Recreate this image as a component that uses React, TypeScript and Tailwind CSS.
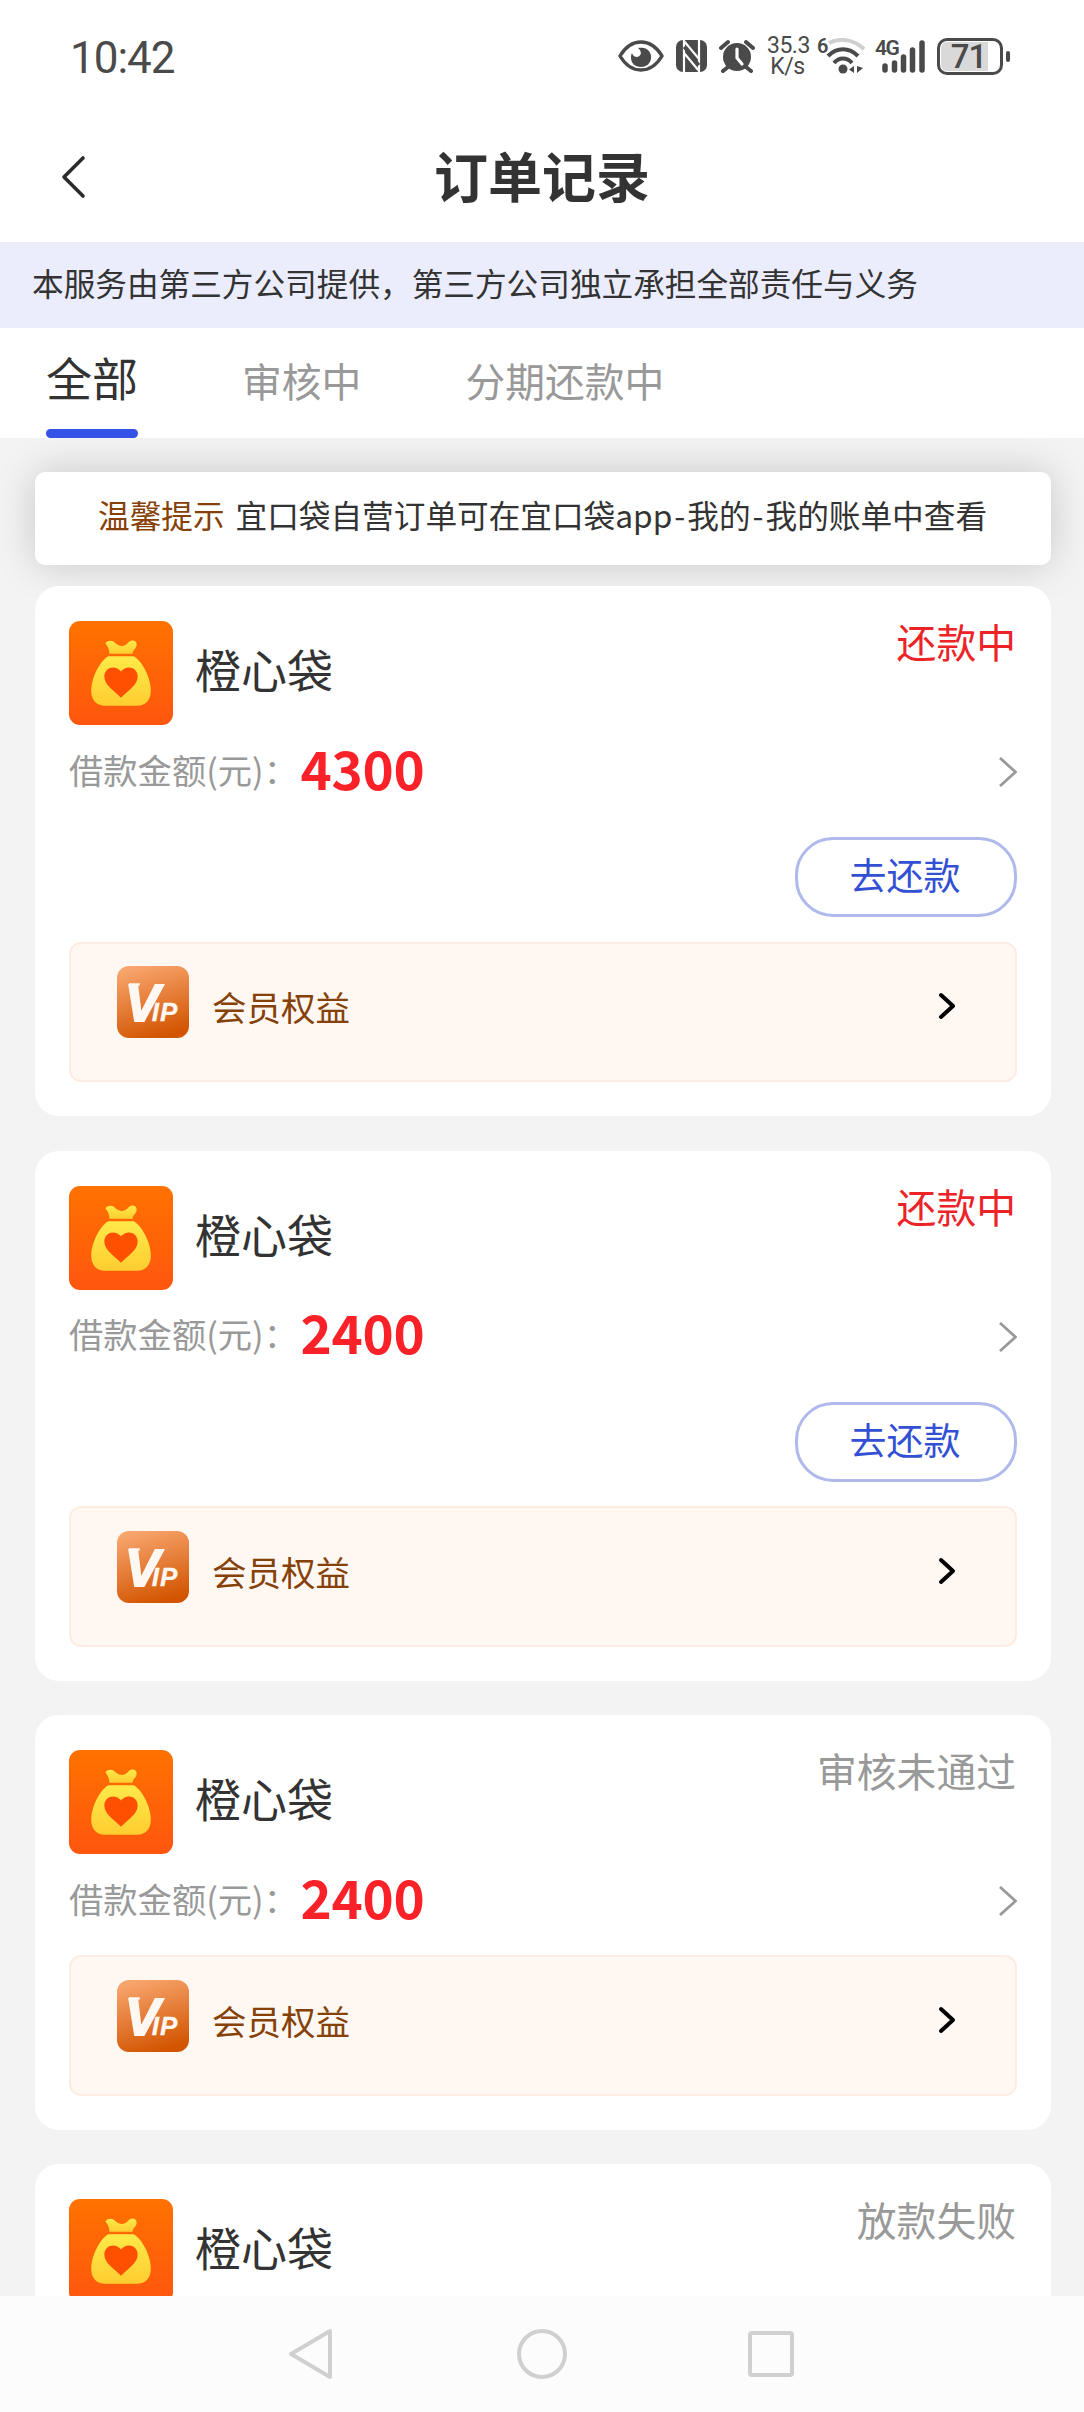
import clsx from 'clsx';

type Order = {
  id: number;
  name: string;
  amount?: number;
  status: string;
  repayable: boolean;
};

const orders: Order[] = [
  { id: 1, name: '橙心袋', amount: 4300, status: '还款中', repayable: true },
  { id: 2, name: '橙心袋', amount: 2400, status: '还款中', repayable: true },
  { id: 3, name: '橙心袋', amount: 2400, status: '审核未通过', repayable: false },
  { id: 4, name: '橙心袋', status: '放款失败', repayable: false },
];

const tabs = ['全部', '审核中', '分期还款中'];

const StatusBar = () => (
  <div className="flex h-[112px] shrink-0 items-start justify-between pl-[70px] pr-[74px] pt-[36px] font-['Roboto'] text-[#4a4a4a]">
    <span className="text-[44px] leading-[44px] tracking-[-1px]">10:42</span>
    <div className="flex h-[40px] items-center">
      <svg className="mr-3 h-[32px] w-[46px]" viewBox="0 0 46 32">
        <path
          d="M2 16C8 6 15 2 23 2s15 4 21 14c-6 10-13 14-21 14S8 26 2 16Z"
          fill="none"
          stroke="currentColor"
          strokeWidth="3.4"
        />
        <path d="M20 8c10-2 14 5 13 11-1 5-5 8-10 8-6 0-10-4-10-9 0-2 0-3 1-5 1 3 3 4 5 4 5-1 5-6 1-9Z" fill="currentColor" />
      </svg>
      <svg className="mr-3 h-[32px] w-[31px]" viewBox="0 0 31 32">
        <rect width="31" height="32" rx="7" fill="currentColor" />
        <path d="M8 32V1l15 18V0M8 13l15 18V1" fill="none" stroke="white" strokeWidth="2.2" />
        <path d="M8 7l15 18" stroke="currentColor" strokeWidth="3" />
      </svg>
      <svg className="mr-3 h-[34px] w-[36px]" viewBox="0 0 36 34">
        <circle cx="18" cy="18" r="14" fill="currentColor" />
        <path d="M2 9l7-6M34 9l-7-6M9 28l-5 4M27 28l5 4" stroke="currentColor" strokeWidth="4" strokeLinecap="round" />
        <path d="M18 10v9l5 6" fill="none" stroke="white" strokeWidth="3.2" strokeLinecap="round" />
      </svg>
      <div className="mr-[9px] w-[41px] text-center text-[23px] leading-[21px] tracking-[-0.5px]">
        <div>35.3</div>
        <div>K/s</div>
      </div>
      <div className="relative mr-[10px] h-[37px] w-[48px]">
        <span className="absolute left-0 top-0 text-[20px] font-semibold leading-[16px]">6</span>
        <svg className="h-[37px] w-[48px]" viewBox="0 0 48 37" fill="none" strokeWidth="4">
          <path d="M12 5c12-6 25-3 35 6" stroke="#cfcfcf" />
          <path d="M11 18c9-9 21-9 30 0M17 25c5-6 13-6 18 0" stroke="currentColor" />
          <circle cx="26" cy="31" r="4.5" fill="currentColor" />
          <path d="M37 28v7l-5-3.5ZM40 28v7l6-5Z" fill="currentColor" />
        </svg>
      </div>
      <div className="relative mr-3 h-[37px] w-[50px]">
        <span className="absolute left-0 top-[2px] text-[21px] font-semibold leading-[17px] tracking-[-1.5px]">4G</span>
        <svg className="h-[37px] w-[50px]" viewBox="0 0 50 37" stroke="currentColor" strokeWidth="5.5" strokeLinecap="round">
          <path d="M10 28v4M19.500 25v7M28.500 19v13M37.500 12v20M47 5v27" />
        </svg>
      </div>
      <div className="flex h-[37px] w-[66px] rounded-[10px] border-[3px] border-[#4a4a4a] p-px">
        <div className="flex h-full w-[47px] items-center justify-center rounded-l-[6px] bg-[#d9d9d9] pl-2 text-[33px] font-medium leading-none tracking-[-1px]">
          71
        </div>
      </div>
      <div className="ml-[3px] h-[11px] w-[4px] rounded-sm bg-[#4a4a4a]" />
    </div>
  </div>
);

const Header = () => (
  <header className="grid h-[130px] shrink-0 grid-cols-3 items-center">
    <svg className="ml-[60px] h-[44px] w-[26px]" viewBox="0 0 26 44" fill="none">
      <path d="M23 3L4 22l19 19" stroke="#2b2b2b" strokeWidth="3.6" strokeLinecap="round" strokeLinejoin="round" />
    </svg>
    <h1 className="whitespace-nowrap pb-[5px] text-center text-[54px] font-bold leading-[60px] text-[#333]">订单记录</h1>
  </header>
);

const Tabs = () => (
  <nav className="flex h-[110px] shrink-0 gap-[104px] bg-white pl-[46px]">
    {tabs.map((tab, i) => (
      <div
        key={tab}
        className={clsx(
          'flex flex-col justify-between whitespace-nowrap',
          i === 0 ? 'text-[46px] leading-[97px] text-[#333]' : 'text-[39.8px] leading-[103px] text-[#999]'
        )}
      >
        <span className="h-[101px]">{tab}</span>
        {i === 0 && <div className="h-[9px] rounded-[5px] bg-[#3452e6]" />}
      </div>
    ))}
  </nav>
);

const BagLogo = () => (
  <svg className="size-[104px] shrink-0 rounded-[11px]" viewBox="0 0 103 103">
    <defs>
      <linearGradient id="bagBg" x1="0" y1="0" x2="0" y2="1">
        <stop stopColor="#ff7200" />
        <stop offset="1" stopColor="#ff560e" />
      </linearGradient>
      <linearGradient id="bag" x1="0" y1="0" x2="0" y2="1">
        <stop stopColor="#ffea49" />
        <stop offset="1" stopColor="#ffcd30" />
      </linearGradient>
    </defs>
    <rect width="103" height="103" fill="url(#bagBg)" />
    <path
      d="M36 22c3-3 6-3 9-1 5 5 10 5 14 0 3-3 8-2 8 2 0 5-4 5-4 9.500H40c0-5-2-7.500-4-10.500Z"
      fill="url(#bag)"
    />
    <path
      d="M39 35h25c9 5 17 22 17 34 0 9-5 15-14 15H36c-9 0-14-6-14-15 0-12 8-29 17-34Z"
      fill="url(#bag)"
    />
    <path d="M51.500 76C43 68 35 63 35 55c0-9 11-12 16.500-5C57 43 68 46 68 55c0 8-8 13-16.500 21Z" fill="#ff5000" />
  </svg>
);

const VipLogo = () => (
  <svg className="size-[72px] shrink-0" viewBox="0 0 72 72">
    <defs>
      <linearGradient id="vipBg" x1="0.3" y1="0" x2="0.6" y2="1">
        <stop stopColor="#f8a56d" />
        <stop offset="1" stopColor="#d25400" />
      </linearGradient>
    </defs>
    <rect width="72" height="72" rx="12" fill="url(#vipBg)" />
    <g fill="#fff8f2" stroke="#fff8f2" fontFamily="Liberation Sans" fontWeight="bold" fontStyle="italic">
      <rect x="12.5" y="17.5" width="10" height="2" strokeWidth="0.5" />
      <text x="8" y="54.5" fontSize="52" strokeWidth="2">
        V
        <tspan dx="-8" fontSize="26" strokeWidth="0.3" letterSpacing="1">
          IP
        </tspan>
      </text>
    </g>
  </svg>
);

const OrderCard = ({ order }: { order: Order }) => (
  <section className="shrink-0 rounded-[24px] bg-white px-[34px] pb-[34px] pt-[35px]">
    <div className="flex h-[103px] justify-between">
      <div className="flex items-start">
        <BagLogo />
        <span className="pl-[22px] text-[46px] leading-[95px] text-[#333]">{order.name}</span>
      </div>
      <span className={clsx('pr-px text-[39.8px] leading-[39px]', order.repayable ? 'text-[#ec2327]' : 'text-[#999]')}>
        {order.status}
      </span>
    </div>
    {order.amount && (
      <>
        <div className="flex h-[102px] items-center">
          <span className="whitespace-nowrap pb-[13px] text-[34.3px] leading-[50px] text-[#999]">借款金额(元)：</span>
          <span className="ml-[2.5px] pb-[17px] text-[53px] font-bold leading-[60px] tracking-[-0.3px] text-[#fa2228]">
            {order.amount}
          </span>
          <svg className="mb-[6px] ml-auto h-[30px] w-[18px]" viewBox="0 0 18 30" fill="none">
            <path d="M1 1l15.500 14L1 29" stroke="#999" strokeWidth="2.8" />
          </svg>
        </div>
        {order.repayable && (
          <div className="flex h-[115.5px] justify-end pt-[11px]">
            <button className="h-[80px] w-[222px] rounded-[38px] border-[3px] border-[#b0b9ec] pb-[6px] pr-[2px] text-[37px] leading-[66px] text-[#3350d4]">
              去还款
            </button>
          </div>
        )}
        <div className="flex h-[140.5px] items-start rounded-[12px] border-2 border-[#fcece1] bg-[#fff7f1] pl-[46px] pr-[58px] pt-[22.5px]">
          <VipLogo />
          <span className="ml-[23px] text-[34.5px] leading-[81px] text-[#854108]">会员权益</span>
          <svg className="ml-auto mt-[25px] h-[30px] w-[20px]" viewBox="0 0 20 30" fill="none">
            <path d="M4 4l12 11L4 26" stroke="#000" strokeWidth="4" strokeLinecap="round" strokeLinejoin="round" />
          </svg>
        </div>
      </>
    )}
  </section>
);

const SystemNav = () => (
  <footer className="flex h-[116px] shrink-0 justify-center gap-[179px] bg-[#fcfcfc] pt-[32px]">
    <svg className="h-[52px] w-[48px]" viewBox="2 0 48 52" fill="none" stroke="#d0d0d0" strokeWidth="4" strokeLinejoin="round">
      <path d="M43 3v46L4 26Z" />
    </svg>
    <svg className="h-[52px] w-[52px]" viewBox="0 0 52 52" fill="none" stroke="#d0d0d0" strokeWidth="4">
      <circle cx="26" cy="26" r="23" />
    </svg>
    <svg className="h-[52px] w-[48px]" viewBox="0 0 48 52" fill="none" stroke="#d0d0d0" strokeWidth="4">
      <rect x="3" y="5" width="42" height="42" rx="2" />
    </svg>
  </footer>
);

const App = () => (
  <div className="flex h-[2412px] w-[1084px] flex-col overflow-hidden bg-white font-['Noto_Sans_CJK_SC',sans-serif]">
    <StatusBar />
    <Header />
    <p className="h-[86px] shrink-0 bg-[#ebedfd] pl-[32px] text-[31.65px] leading-[80px] text-[#333]">
      本服务由第三方公司提供，第三方公司独立承担全部责任与义务
    </p>
    <Tabs />
    <main className="flex min-h-0 flex-1 flex-col overflow-hidden bg-[#f3f3f3] pl-[35px] pr-[33px] pt-[34px]">
      <div className="mb-[21px] flex h-[93px] shrink-0 gap-[11px] whitespace-nowrap rounded-[10px] bg-white pl-[63px] text-[31.65px] leading-[85px] text-[#333] shadow-[0_0_40px_rgba(0,0,0,0.18)]">
        <span className="text-[#854108]">温馨提示</span>
        <span>
          宜口袋自营订单可在宜口袋app<span className="mx-[2px]">-</span>我的<span className="mx-[2px]">-</span>
          我的账单中查看
        </span>
      </div>
      <div className="flex flex-col gap-[34.5px]">
        {orders.map((order) => (
          <OrderCard key={order.id} order={order} />
        ))}
      </div>
    </main>
    <SystemNav />
  </div>
);

export default App;
